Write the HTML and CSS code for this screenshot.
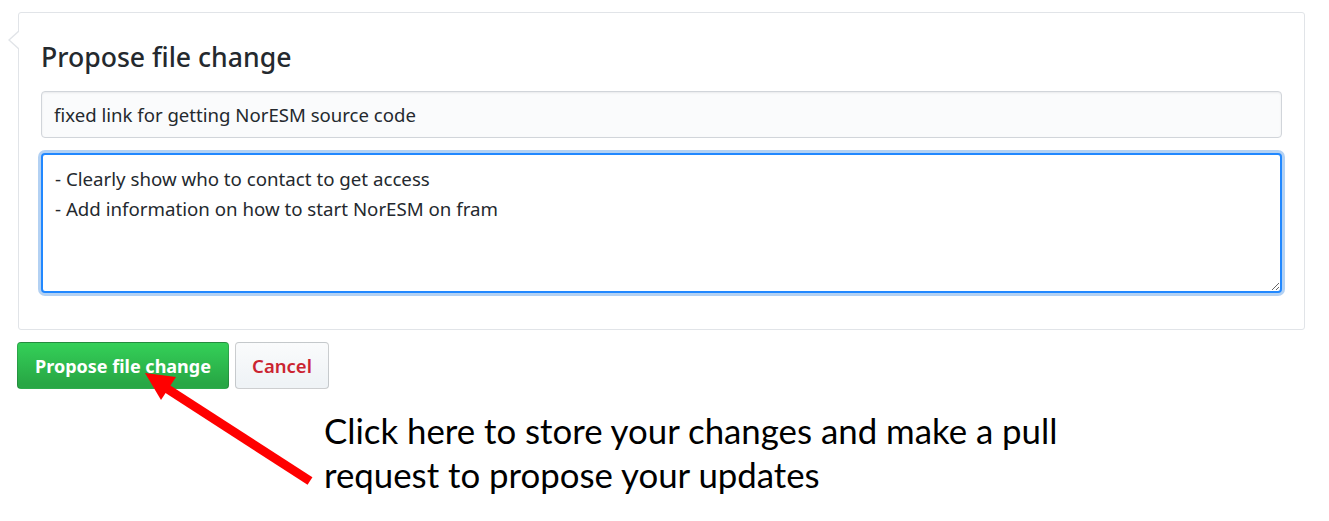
FILE: index.html
```html
<!DOCTYPE html>
<html>
<head>
<meta charset="utf-8">
<link rel="stylesheet" href="styles.css">
</head>
<body>
<div class="page">
  <form class="panel">
    <h3 class="panel-title">Propose file change</h3>
    <input class="summary" type="text" value="fixed link for getting NorESM source code">
    <textarea class="description">- Clearly show who to contact to get access
- Add information on how to start NorESM on fram</textarea>
  </form>
  <div class="actions">
    <button class="btn btn-primary" type="button">Propose file change</button>
    <button class="btn btn-cancel" type="button">Cancel</button>
  </div>
  <p class="note">Click here to store your changes and make a pull<br>request to propose your updates</p>
</div>
<svg class="arrow" width="1329" height="521" viewBox="0 0 1329 521">
  <line x1="310" y1="481" x2="166" y2="388" stroke="#ff0000" stroke-width="9"/>
  <polygon points="145,373 176,377 161,400" fill="#ff0000"/>
</svg>
</body>
</html>
```
FILE: styles.css
```css
html, body {
  margin: 0;
  padding: 0;
  background: #ffffff;
}

body {
  position: relative;
  width: 1329px;
  height: 521px;
  overflow: hidden;
  font-family: "Noto Sans", "Open Sans", sans-serif;
  color: #24292e;
}

.page {
  padding: 12px 25px 0 17px;
}

.panel {
  position: relative;
  box-sizing: border-box;
  width: 1287px;
  height: 318px;
  margin: 0 0 0 1px;
  padding: 0 22px;
  border: 1px solid #e1e4e8;
  border-radius: 3px;
  display: flex;
  flex-direction: column;
}

.panel::before,
.panel::after {
  content: "";
  position: absolute;
  top: 17px;
  width: 0;
  height: 0;
  border-style: solid;
}

.panel::before {
  left: -11px;
  border-width: 10px 11px 10px 0;
  border-color: transparent #e1e4e8 transparent transparent;
}

.panel::after {
  left: -9px;
  top: 18px;
  border-width: 9px 10px 9px 0;
  border-color: transparent #ffffff transparent transparent;
}

.panel-title {
  margin: 26px 0 0 0;
  font-size: 26.6px;
  line-height: 36px;
  font-weight: 500;
  color: #24292e;
}

.summary {
  box-sizing: border-box;
  margin-top: 16px;
  width: 100%;
  height: 47px;
  padding: 0 12px;
  font-family: inherit;
  font-size: 18.6px;
  color: #24292e;
  background: #fafbfc;
  border: 1px solid #d1d5da;
  border-radius: 4px;
  box-shadow: inset 0 1px 2px rgba(27, 31, 35, 0.075);
  outline: none;
}

.description {
  box-sizing: border-box;
  margin-top: 15px;
  width: 100%;
  height: 140px;
  padding: 9px 12px;
  font-family: inherit;
  font-size: 18.7px;
  line-height: 30px;
  color: #24292e;
  background: #ffffff;
  border: 2px solid #2188ff;
  border-radius: 4px;
  box-shadow: 0 0 0 3px rgba(3, 102, 214, 0.3);
  outline: none;
  resize: vertical;
}

.actions {
  display: flex;
  gap: 6px;
  margin-top: 12px;
}

.btn {
  box-sizing: border-box;
  height: 47px;
  padding: 0 10px;
  font-family: inherit;
  font-size: 18px;
  font-weight: 700;
  border-radius: 4px;
  cursor: pointer;
}

.btn-primary {
  width: 212px;
  color: #ffffff;
  background-image: linear-gradient(-180deg, #34d058 0%, #28a745 90%);
  border: 1px solid rgba(27, 31, 35, 0.2);
}

.btn-cancel {
  width: 94px;
  font-weight: 600;
  font-size: 18.5px;
  color: #cb2431;
  background-image: linear-gradient(-180deg, #fafbfc 0%, #eff3f6 90%);
  border: 1px solid rgba(27, 31, 35, 0.2);
}

.note {
  margin: 20px 0 0 307px;
  font-family: "Lato", "Noto Sans", sans-serif;
  font-size: 34.8px;
  line-height: 44px;
  color: #000000;
}

.arrow {
  position: absolute;
  left: 0;
  top: 0;
  pointer-events: none;
}
```
